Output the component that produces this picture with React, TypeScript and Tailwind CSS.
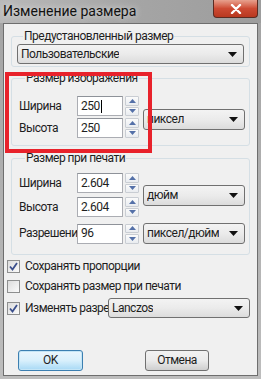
const ui = "font-['Roboto',sans-serif] text-[12px] leading-[15px] tracking-[-0.5px] text-[#1e1e1e]"

function Arrow() {
  return (
    <svg width="9" height="5" viewBox="0 0 9 5" className="shrink-0">
      <path d="M0 0h9L4.5 5z" fill="#111" />
    </svg>
  )
}

function Combo({ text, className }: { text: string; className: string }) {
  return (
    <div
      className={`flex items-center justify-between rounded-[3px] border border-[#707070] bg-linear-to-b from-[#f3f3f3] via-[#ebebeb] to-[#dcdcdc] pl-[3px] pr-[6px] ${className}`}
    >
      <span className="truncate">{text}</span>
      <Arrow />
    </div>
  )
}

function Spin() {
  return (
    <div className="ml-[2px] flex h-[20px] w-[14px] flex-col gap-[1px]">
      {[0, 1].map((i) => (
        <div
          key={i}
          className="flex flex-1 items-center justify-center rounded-[1px] border border-[#c9cdd3] bg-linear-to-b from-[#fbfbfb] to-[#e9ecf0]"
        >
          <svg width="7" height="4" viewBox="0 0 7 4">
            <path d={i === 0 ? 'M0 4L3.5 0 7 4z' : 'M0 0h7L3.5 4z'} fill="#5470a8" />
          </svg>
        </div>
      ))}
    </div>
  )
}

function Field({ value, caret }: { value: string; caret?: boolean }) {
  return (
    <div className="flex h-[20px] w-[46px] items-center border border-[#abadb3] border-t-[#8e9299] bg-white pl-[3px]">
      {value}
      {caret && <span className="ml-[1px] h-[13px] w-px bg-black" />}
    </div>
  )
}

function Row({ label, value, caret, mt }: { label: string; value: string; caret?: boolean; mt: string }) {
  return (
    <div className={`relative flex items-center ${mt}`}>
      <span className="w-[58px] whitespace-nowrap">{label}</span>
      <div className="relative flex items-center">
        <Field value={value} caret={caret} />
        <Spin />
      </div>
    </div>
  )
}

function Check({ label, checked, className }: { label: string; checked: boolean; className?: string }) {
  return (
    <div className={`flex items-center ${className ?? ''}`}>
      <div className="flex h-[13px] w-[13px] shrink-0 items-center justify-center border border-[#8e8f8f] bg-linear-to-br from-[#dcdcdc] to-[#fbfbfb]">
        {checked && (
          <svg width="9" height="9" viewBox="0 0 9 9">
            <path d="M1 4.5l2.5 3L8 1" stroke="#3b4f8c" strokeWidth="1.8" fill="none" />
          </svg>
        )}
      </div>
      <span className="ml-[5px] whitespace-nowrap">{label}</span>
    </div>
  )
}

export default function App() {
  return (
    <div className={`relative flex h-[379px] w-[261px] flex-col overflow-hidden bg-linear-to-b from-[#a3a3a3] to-[#bdbdbd] ${ui}`}>
      {/* title bar */}
      <div className="flex h-[23px] shrink-0 items-start justify-between bg-linear-to-r from-[#b9b9b9] via-[#a5a5a5] to-[#9d9d9d]">
        <span className="ml-[3px] mt-[3px] text-[14px] leading-[17px] tracking-normal text-[#111] [text-shadow:0_0_6px_#e8e8e8]">
          Изменение размера
        </span>
        <div className="mr-[3px] flex h-[18px] w-[45px] items-center justify-center rounded-b-[4px] border border-t-0 border-[#5b2b22] bg-linear-to-b from-[#e7a08e] via-[#cd4a33] to-[#b8381f]">
          <svg width="12" height="10" viewBox="0 0 12 10">
            <path d="M2 1l8 8M10 1l-8 8" stroke="#fff" strokeWidth="2.4" strokeLinecap="round" />
          </svg>
        </div>
      </div>

      {/* client area */}
      <div className="mx-[3px] mb-[3px] flex flex-1 flex-col border border-[#6e6e6e] bg-[#f0f0f0] px-[7px]">
        <fieldset className="mt-[5px] rounded-[3px] border border-[#d5dfe5] px-[5px] pb-[2px]">
          <legend className="ml-[6px] px-[1px]">Предустановленный размер</legend>
          <Combo text="Пользовательские" className="h-[20px]" />
        </fieldset>

        <fieldset className="mt-[4px] rounded-[3px] border border-[#d5dfe5] pb-[7px] pl-[7px] pr-[4px]">
          <legend className="ml-[6px] px-[1px]">Размер изображения</legend>
          <div className="flex items-center pt-[10px]">
            <div className="flex flex-col">
              <Row label="Ширина" value="250" caret mt="" />
              <Row label="Высота" value="250" mt="mt-[2px]" />
            </div>
            <Combo text="пиксел" className="ml-[4px] mt-[5px] h-[21px] flex-1" />
          </div>
        </fieldset>

        <fieldset className="mt-[5px] rounded-[3px] border border-[#d5dfe5] pb-[10px] pl-[7px] pr-[4px]">
          <legend className="ml-[6px] px-[1px]">Размер при печати</legend>
          <div className="flex items-center pt-[7px]">
            <div className="flex flex-col">
              <Row label="Ширина" value="2.604" mt="" />
              <Row label="Высота" value="2.604" mt="mt-[4px]" />
            </div>
            <Combo text="дюйм" className="ml-[4px] h-[21px] flex-1" />
          </div>
          <div className="mt-[6px] flex items-center">
            <Row label="Разрешение" value="96" mt="" />
            <Combo text="пиксел/дюйм" className="ml-[4px] h-[21px] flex-1" />
          </div>
        </fieldset>

        <div className="-ml-[4px] mt-[4px] flex flex-col">
          <Check label="Сохранять пропорции" checked />
          <Check label="Сохранять размер при печати" checked={false} className="mt-[5px]" />
          <div className="mt-[4px] flex items-center">
            <div className="relative w-[101px]">
              <Check label="Изменять разрешение" checked />
            </div>
            <Combo text="Lanczos" className="relative h-[20px] w-[142px]" />
          </div>
        </div>

        <div className="mt-[32px] flex justify-between pl-[7px] pr-[41px]">
          <button
            type="button"
            className="h-[21px] w-[65px] rounded-[3px] border border-[#3c7fb1] bg-linear-to-b from-[#eaf6fd] via-[#d9f0fc] to-[#a7d9f5] shadow-[inset_0_0_0_1px_#c4e5f6]"
          >
            OK
          </button>
          <button
            type="button"
            className="h-[21px] w-[64px] rounded-[3px] border border-[#707070] bg-linear-to-b from-[#f2f2f2] via-[#ebebeb] to-[#cfcfcf]"
          >
            Отмена
          </button>
        </div>
      </div>

      {/* red annotation */}
      <div className="absolute left-[5px] top-[72px] h-[81px] w-[147px] border-[4px] border-[#e8222b]" />
    </div>
  )
}
